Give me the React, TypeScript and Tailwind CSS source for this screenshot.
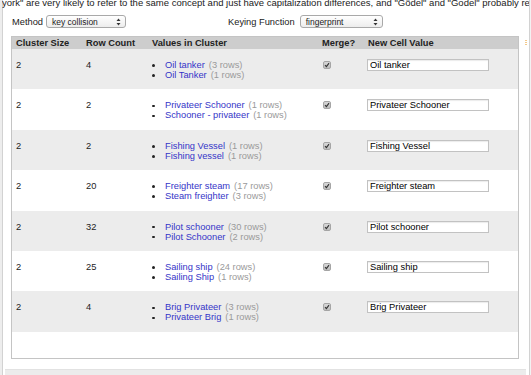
import React from "react";

type Row = {
  size: string;
  count: string;
  values: [string, string][];
  newVal: string;
};

const rows: Row[] = [
  { size: "2", count: "4", values: [["Oil tanker", "(3 rows)"], ["Oil Tanker", "(1 rows)"]], newVal: "Oil tanker" },
  { size: "2", count: "2", values: [["Privateer Schooner", "(1 rows)"], ["Schooner - privateer", "(1 rows)"]], newVal: "Privateer Schooner" },
  { size: "2", count: "2", values: [["Fishing Vessel", "(1 rows)"], ["Fishing vessel", "(1 rows)"]], newVal: "Fishing Vessel" },
  { size: "2", count: "20", values: [["Freighter steam", "(17 rows)"], ["Steam freighter", "(3 rows)"]], newVal: "Freighter steam" },
  { size: "2", count: "32", values: [["Pilot schooner", "(30 rows)"], ["Pilot Schooner", "(2 rows)"]], newVal: "Pilot schooner" },
  { size: "2", count: "25", values: [["Sailing ship", "(24 rows)"], ["Sailing Ship", "(1 rows)"]], newVal: "Sailing ship" },
  { size: "2", count: "4", values: [["Brig Privateer", "(3 rows)"], ["Privateer Brig", "(1 rows)"]], newVal: "Brig Privateer" },
];

const font = { fontFamily: '"Liberation Sans", Arial, Helvetica, sans-serif' };

function Arrows() {
  return (
    <svg width="5" height="8" viewBox="0 0 5 8" className="shrink-0">
      <path d="M2.5 0.5 L4.5 3 L0.5 3 Z" fill="#333" />
      <path d="M2.5 7.5 L4.5 5 L0.5 5 Z" fill="#333" />
    </svg>
  );
}

function Select({ label, width }: { label: string; width: string }) {
  return (
    <div
      className={`${width} h-[13px] rounded-[3px] border border-[#a9a9a9] bg-gradient-to-b from-white to-[#ededed] flex items-center justify-between pl-[5px] pr-[4px] text-[8.5px] leading-[10px] text-[#222]`}
    >
      <span>{label}</span>
      <Arrows />
    </div>
  );
}

function Checkbox() {
  return (
    <div className="w-[8px] h-[8px] rounded-[2px] border border-[#a5a5a5] bg-gradient-to-b from-[#d8d8d8] to-[#bdbdbd] flex items-center justify-center">
      <svg width="6" height="6" viewBox="0 0 6 6">
        <path d="M1 3.2 L2.4 4.6 L5 1.2" stroke="#333" strokeWidth="1.1" fill="none" />
      </svg>
    </div>
  );
}

export default function App() {
  return (
    <div className="relative w-[531px] h-[375px] overflow-hidden bg-white flex text-[#222]" style={font}>
      <div className="w-[2px] h-full bg-[#ededed]" />
      <div className="w-[1px] h-full bg-[#d2d2d2]" />
      <div className="w-[526px] h-full flex flex-col">
        <div className="-mt-[2px] -ml-[1px] h-[10px] text-[9.5px] leading-[10px] whitespace-nowrap overflow-hidden">
          york" are very likely to refer to the same concept and just have capitalization differences, and "Gödel" and "Godel" probably re
        </div>
        <div className="mt-[7px] flex items-center h-[13px] text-[9.3px] leading-[10px]">
          <span className="ml-[9px]">Method</span>
          <div className="ml-[3px]">
            <Select label="key collision" width="w-[80px]" />
          </div>
          <span className="ml-[102px]">Keying Function</span>
          <div className="ml-[5px]">
            <Select label="fingerprint" width="w-[83px]" />
          </div>
        </div>
        <div className="mt-[8px] ml-[8px] w-[508px] h-[323px] border border-[#c4c4c4] flex flex-col text-[9.3px]">
          <div className="h-[12px] bg-[#cdcdcd] grid grid-cols-[70px_66px_170px_46px_1fr] font-bold leading-[12px] text-[#222]">
            <div className="pl-[4px]">Cluster Size</div>
            <div className="pl-[4px]">Row Count</div>
            <div className="pl-[4px]">Values in Cluster</div>
            <div className="pl-[4px]">Merge?</div>
            <div className="pl-[4px]">New Cell Value</div>
          </div>
          {rows.map((r, i) => (
            <div
              key={i}
              className={`h-[40.4px] grid grid-cols-[70px_66px_170px_46px_1fr] leading-[10px] ${i % 2 === 0 ? "bg-[#ececec]" : "bg-white"}`}
            >
              <div className="pl-[4px] pt-[11px]">{r.size}</div>
              <div className="pl-[4px] pt-[11px]">{r.count}</div>
              <div className="pl-[4px] pt-[11px] flex flex-col">
                {r.values.map(([v, c], j) => (
                  <div key={j} className="flex items-center whitespace-nowrap">
                    <span className="w-[2.5px] h-[2.5px] rounded-full bg-[#222] mt-[1px] shrink-0" />
                    <span className="ml-[10.5px] text-[#3535c8]">{v}</span>
                    <span className="ml-[4px] text-[#9a9a9a]">{c}</span>
                  </div>
                ))}
              </div>
              <div className="pl-[5px] pt-[12px]">
                <Checkbox />
              </div>
              <div className="pl-[3px] pt-[10px]">
                <div className="w-[122px] h-[12px] border border-[#c2c2c2] bg-white shadow-[inset_0_1px_1px_rgba(0,0,0,0.08)] pl-[2px] leading-[10px] text-black whitespace-nowrap overflow-hidden">
                  {r.newVal}
                </div>
              </div>
            </div>
          ))}
          <div className="flex-1 bg-white" />
        </div>
        <div className="mt-[10px] ml-[2px] w-[521px] flex-1 bg-[#ececec] border-t border-[#e2e2e2]" />
      </div>
      <div className="w-[1px] h-full bg-[#d2d2d2]" />
      <div className="w-[1px] h-full bg-[#f2f2f2]" />
      <div className="absolute left-[525px] top-[40px] flex flex-col gap-[1px]">
        <div className="w-[2px] h-[1px] bg-[#f3c98a]" />
        <div className="w-[2px] h-[1px] bg-[#f3c98a]" />
        <div className="w-[2px] h-[1px] bg-[#f3c98a]" />
      </div>
    </div>
  );
}
